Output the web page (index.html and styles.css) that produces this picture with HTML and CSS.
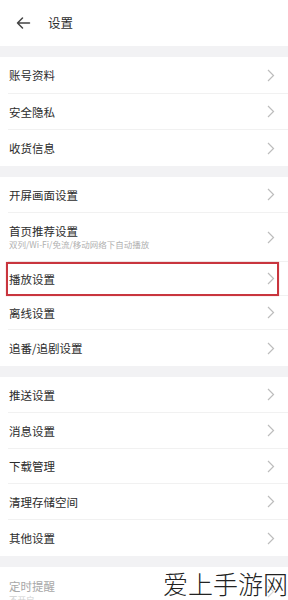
FILE: index.html
```html
<!DOCTYPE html>
<html lang="zh">
<head>
<meta charset="utf-8">
<title>设置</title>
<link rel="stylesheet" href="styles.css">
</head>
<body>
<div class="page">
  <header class="topbar">
    <svg class="back" width="16" height="14" viewBox="0 0 16 14"><path d="M14.5 7H2.5M7.5 2L2.5 7L7.5 12" fill="none" stroke="#444" stroke-width="1.5" stroke-linecap="round" stroke-linejoin="round"/></svg>
    <span class="title">设置</span>
  </header>

  <section class="group">
    <div class="row h37"><span class="label">账号资料</span><svg class="chev" viewBox="0 0 8 13"><path d="M1 1L6.5 6.5L1 12" fill="none" stroke="#bdbdbd" stroke-width="1.2"/></svg></div>
    <div class="row"><span class="label">安全隐私</span><svg class="chev" viewBox="0 0 8 13"><path d="M1 1L6.5 6.5L1 12" fill="none" stroke="#bdbdbd" stroke-width="1.2"/></svg></div>
    <div class="row last"><span class="label">收货信息</span><svg class="chev" viewBox="0 0 8 13"><path d="M1 1L6.5 6.5L1 12" fill="none" stroke="#bdbdbd" stroke-width="1.2"/></svg></div>
  </section>

  <section class="group">
    <div class="row"><span class="label">开屏画面设置</span><svg class="chev" viewBox="0 0 8 13"><path d="M1 1L6.5 6.5L1 12" fill="none" stroke="#bdbdbd" stroke-width="1.2"/></svg></div>
    <div class="row h49"><div class="stack"><span class="label">首页推荐设置</span><span class="sub">双列/Wi-Fi/免流/移动网络下自动播放</span></div><svg class="chev" viewBox="0 0 8 13"><path d="M1 1L6.5 6.5L1 12" fill="none" stroke="#bdbdbd" stroke-width="1.2"/></svg></div>
    <div class="row h34 marked"><span class="label">播放设置</span><svg class="chev" viewBox="0 0 8 13"><path d="M1 1L6.5 6.5L1 12" fill="none" stroke="#bdbdbd" stroke-width="1.2"/></svg></div>
    <div class="row h34"><span class="label">离线设置</span><svg class="chev" viewBox="0 0 8 13"><path d="M1 1L6.5 6.5L1 12" fill="none" stroke="#bdbdbd" stroke-width="1.2"/></svg></div>
    <div class="row last"><span class="label">追番/追剧设置</span><svg class="chev" viewBox="0 0 8 13"><path d="M1 1L6.5 6.5L1 12" fill="none" stroke="#bdbdbd" stroke-width="1.2"/></svg></div>
  </section>

  <section class="group">
    <div class="row"><span class="label">推送设置</span><svg class="chev" viewBox="0 0 8 13"><path d="M1 1L6.5 6.5L1 12" fill="none" stroke="#bdbdbd" stroke-width="1.2"/></svg></div>
    <div class="row"><span class="label">消息设置</span><svg class="chev" viewBox="0 0 8 13"><path d="M1 1L6.5 6.5L1 12" fill="none" stroke="#bdbdbd" stroke-width="1.2"/></svg></div>
    <div class="row h35"><span class="label">下载管理</span><svg class="chev" viewBox="0 0 8 13"><path d="M1 1L6.5 6.5L1 12" fill="none" stroke="#bdbdbd" stroke-width="1.2"/></svg></div>
    <div class="row"><span class="label">清理存储空间</span><svg class="chev" viewBox="0 0 8 13"><path d="M1 1L6.5 6.5L1 12" fill="none" stroke="#bdbdbd" stroke-width="1.2"/></svg></div>
    <div class="row last"><span class="label">其他设置</span><svg class="chev" viewBox="0 0 8 13"><path d="M1 1L6.5 6.5L1 12" fill="none" stroke="#bdbdbd" stroke-width="1.2"/></svg></div>
  </section>

  <section class="group">
    <div class="row h49 last"><div class="stack"><span class="label dim">定时提醒</span><span class="sub faint">不开启</span></div><svg class="chev" viewBox="0 0 8 13"><path d="M1 1L6.5 6.5L1 12" fill="none" stroke="#d8d8d8" stroke-width="1.2"/></svg></div>
  </section>
</div>
<div class="watermark">爱上手游网</div>
</body>
</html>
```

FILE: styles.css
```css
html, body {
  margin: 0;
  padding: 0;
  height: 600px;
  overflow: hidden;
}
body {
  background: #f2f2f4;
  font-family: "Noto Sans CJK SC", "Noto Sans", sans-serif;
  color: #333;
  position: relative;
  width: 288px;
}
.page {
  display: flex;
  flex-direction: column;
  gap: 11px;
}
.topbar {
  height: 46px;
  background: #fff;
  display: flex;
  align-items: center;
  padding-left: 15px;
  box-sizing: border-box;
  padding-bottom: 1px;
}
.back {
  display: block;
  width: 16px;
  height: 14px;
}
.title {
  margin-left: 17px;
  font-size: 12.5px;
  line-height: 14px;
  color: #2c2c2c;
}
.group {
  background: #fff;
}
.row {
  height: 36px;
  margin-left: 8px;
  padding-left: 1px;
  padding-right: 13px;
  display: flex;
  align-items: center;
  justify-content: space-between;
  border-bottom: 1px solid #f1f1f1;
  box-sizing: border-box;
  position: relative;
}
.row.last {
  border-bottom: none;
}
.row.h37 { height: 37px; }
.row.h35 { height: 35px; }
.row.h34 { height: 34px; }
.row.h49 { height: 49px; }
.label {
  font-size: 11.5px;
  line-height: 14px;
  color: #2c2c2c;
}
.label.dim {
  color: #a8a8a8;
}
.stack {
  display: flex;
  flex-direction: column;
  gap: 1px;
}
.stack .label {
  line-height: 13px;
}
.sub {
  font-size: 8.5px;
  line-height: 10px;
  color: #b0b0b0;
}
.sub.faint {
  color: #d0d0d0;
}
.chev {
  width: 8px;
  height: 13px;
  display: block;
}
.marked::before {
  content: "";
  position: absolute;
  left: -2px;
  right: 9px;
  top: 0;
  bottom: -1px;
  border: 2px solid #c9353e;
  box-shadow: 0 0 1px rgba(220, 80, 90, 0.5);
  pointer-events: none;
}
.watermark {
  position: absolute;
  right: 0;
  top: 569px;
  font-size: 25px;
  line-height: 28px;
  font-weight: 300;
  color: #222;
  letter-spacing: 0;
}
```
